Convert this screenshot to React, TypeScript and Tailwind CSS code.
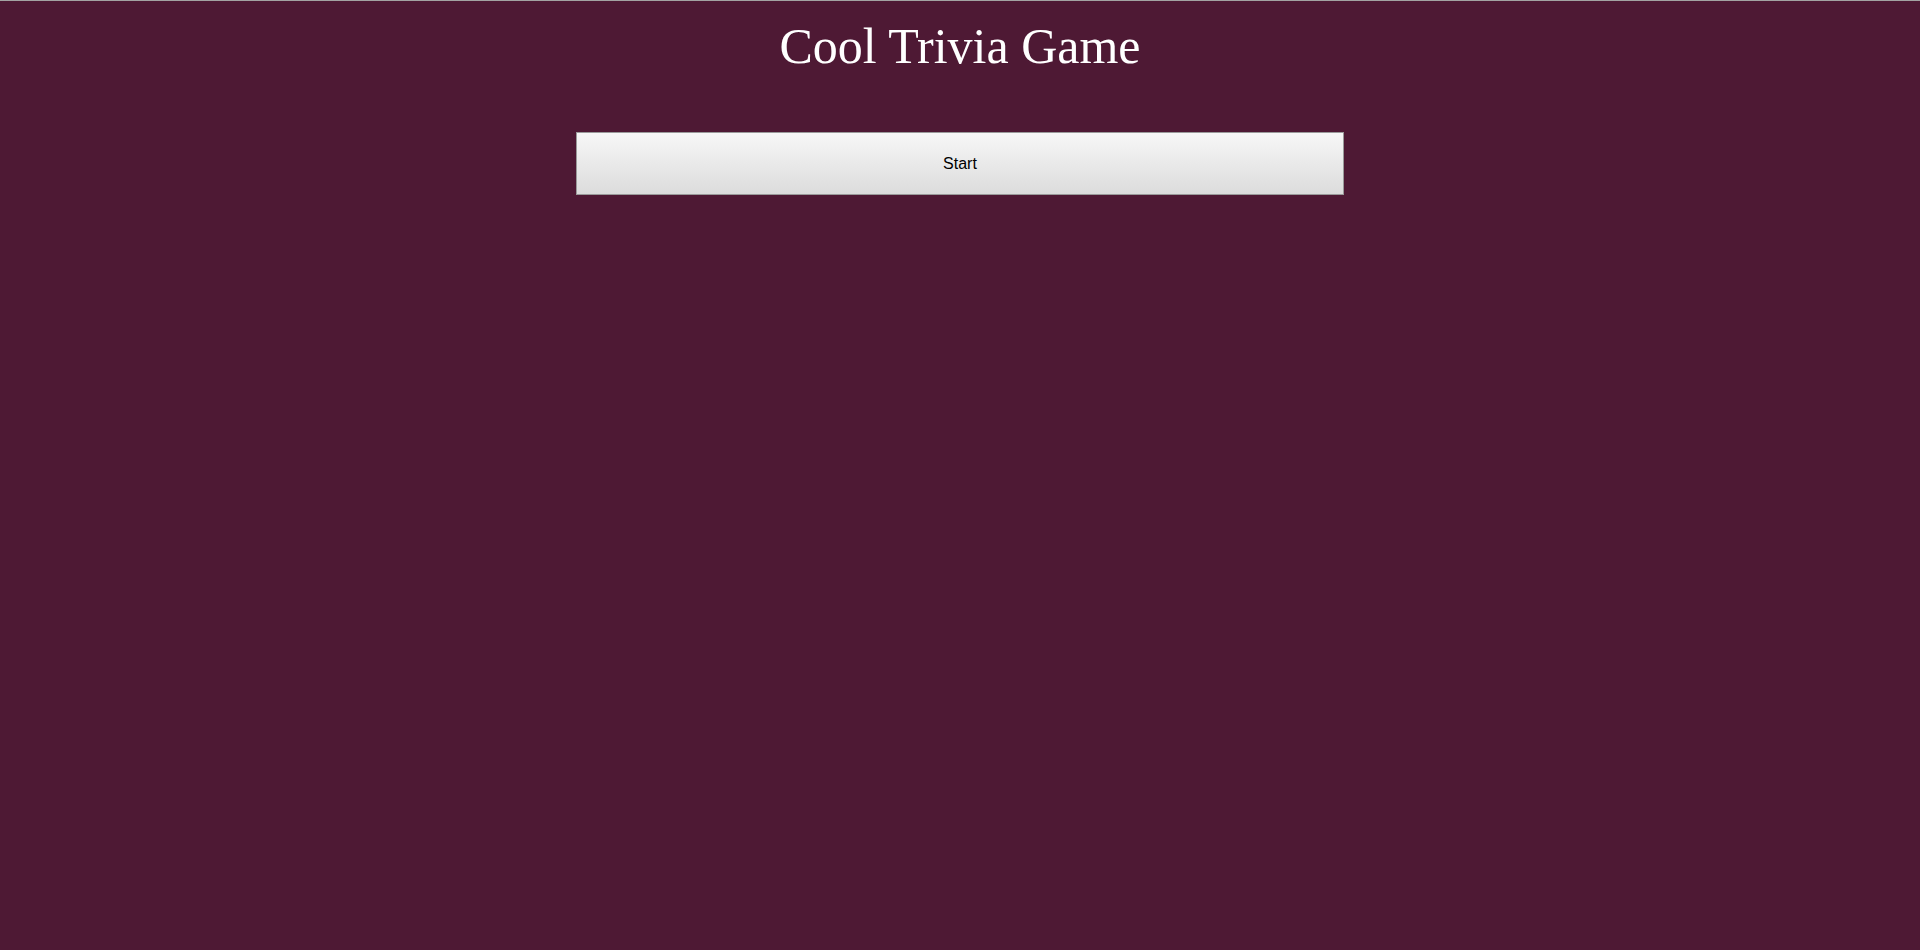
export default function App() {
  return (
    <div className="min-h-[950px] w-full bg-[#4e1934] border-t border-[#a3a3a3] flex flex-col items-center">
      <h1 className="mt-4 text-[50px] leading-[58px] text-white font-normal font-['Liberation_Serif','Times_New_Roman',serif]">
        Cool Trivia Game
      </h1>
      <button className="mt-[57px] w-[768px] h-[63px] border border-[#9a9a9a] bg-gradient-to-b from-[#f7f7f7] to-[#dcdcdc] text-black text-[16px] font-['Liberation_Sans',Arial,sans-serif]">
        Start
      </button>
    </div>
  );
}
